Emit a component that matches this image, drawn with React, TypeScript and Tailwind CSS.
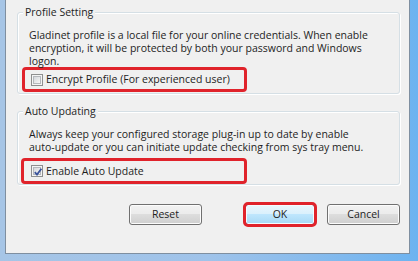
import type { ReactNode } from "react";

const font = { fontFamily: '"Open Sans", "Noto Sans", sans-serif' };

function CheckBox({ checked }: { checked?: boolean }) {
  return (
    <div className="w-[12px] h-[12px] border border-[#8e8f8f] bg-[#f4f4f4] p-[1px] shrink-0">
      <div className="relative w-full h-full border border-[#b5b8bc] bg-gradient-to-br from-[#d4d7db] to-[#f7f7f7]">
        {checked && (
          <svg
            viewBox="0 0 10 10"
            className="absolute left-[-1px] top-[-1px] w-[10px] h-[10px]"
          >
            <path
              d="M1.8 5.2 L4 7.6 L8.4 1.8"
              fill="none"
              stroke="#3a539b"
              strokeWidth="1.8"
            />
          </svg>
        )}
      </div>
    </div>
  );
}

function GroupBox({ title, children }: { title: string; children: ReactNode }) {
  return (
    <fieldset className="border border-[#d5dfe5] rounded-[3px] shadow-[inset_1px_1px_0_#ffffff,1px_1px_0_#ffffff]">
      <legend className="ml-[5px] px-[2px] leading-[14px] bg-[#f0f0f0] text-[#1e1e1e]">
        {title}
      </legend>
      {children}
    </fieldset>
  );
}

function Button({ label, primary }: { label: string; primary?: boolean }) {
  return (
    <button
      className={
        primary
          ? "w-[70px] h-[21px] rounded-[3px] border border-[#3c7fb1] bg-[linear-gradient(#eaf6fd_0%,#d9f0fc_50%,#bee6fd_50%,#a7d9f5_100%)] shadow-[inset_0_0_0_1px_#f4fbff] text-[#1e1e1e] outline-[3px] outline-solid outline-[#e0232b] outline-offset-[-1px]"
          : "w-[73px] h-[21px] rounded-[3px] border border-[#707070] bg-[linear-gradient(#f2f2f2_0%,#ebebeb_50%,#dddddd_50%,#cfcfcf_100%)] shadow-[inset_0_0_0_1px_#fcfcfc] text-[#1e1e1e]"
      }
    >
      {label}
    </button>
  );
}

export default function App() {
  return (
    <div
      className="w-[418px] h-[261px] pl-[5px] pr-[8px] pb-[7px] bg-gradient-to-r from-[#a6c5e6] via-[#9fc3ea] to-[#6db3f0] text-[10.5px] text-[#1e1e1e]"
      style={font}
    >
      <div className="h-full bg-[#f0f0f0] border-l border-r border-b border-[#7f8fa0] pl-[11px] pr-[9px]">
        {/* Profile Setting */}
        <div className="pt-[5px]">
          <GroupBox title="Profile Setting">
            <div className="pt-[10px] pl-[11px] leading-[13px] whitespace-nowrap">
              Gladinet profile is a local file for your online credentials. When enable
              <br />
              encryption, it will be protected by both your password and Windows
              <br />
              logon.
            </div>
            <div className="-mt-[1px] ml-[4px] mb-[1px] w-[225px] h-[25px] border-[3px] border-[#e0232b] rounded-[4px] flex items-center pl-[6px] gap-[3px]">
              <CheckBox />
              <span className="whitespace-nowrap pt-[1px]">Encrypt Profile (For experienced user)</span>
            </div>
          </GroupBox>
        </div>

        {/* Auto Updating */}
        <div className="pt-[10px]">
          <GroupBox title="Auto Updating">
            <div className="pt-[10px] pl-[11px] leading-[13px] whitespace-nowrap">
              Always keep your configured storage plug-in up to date by enable
              <br />
              auto-update or you can initiate update checking from sys tray menu.
            </div>
            <div className="mt-[4px] ml-[3px] w-[226px] h-[26px] border-[3px] border-[#e0232b] rounded-[4px] flex items-center pl-[7px] gap-[3px]">
              <CheckBox checked />
              <span className="whitespace-nowrap pt-[1px]">Enable Auto Update</span>
            </div>
          </GroupBox>
        </div>

        {/* Buttons */}
        <div className="mt-[19px] flex justify-end items-center">
          <Button label="Reset" />
          <div className="ml-[43px]">
            <Button label="OK" primary />
          </div>
          <div className="ml-[12px]">
            <Button label="Cancel" />
          </div>
        </div>
      </div>
    </div>
  );
}
